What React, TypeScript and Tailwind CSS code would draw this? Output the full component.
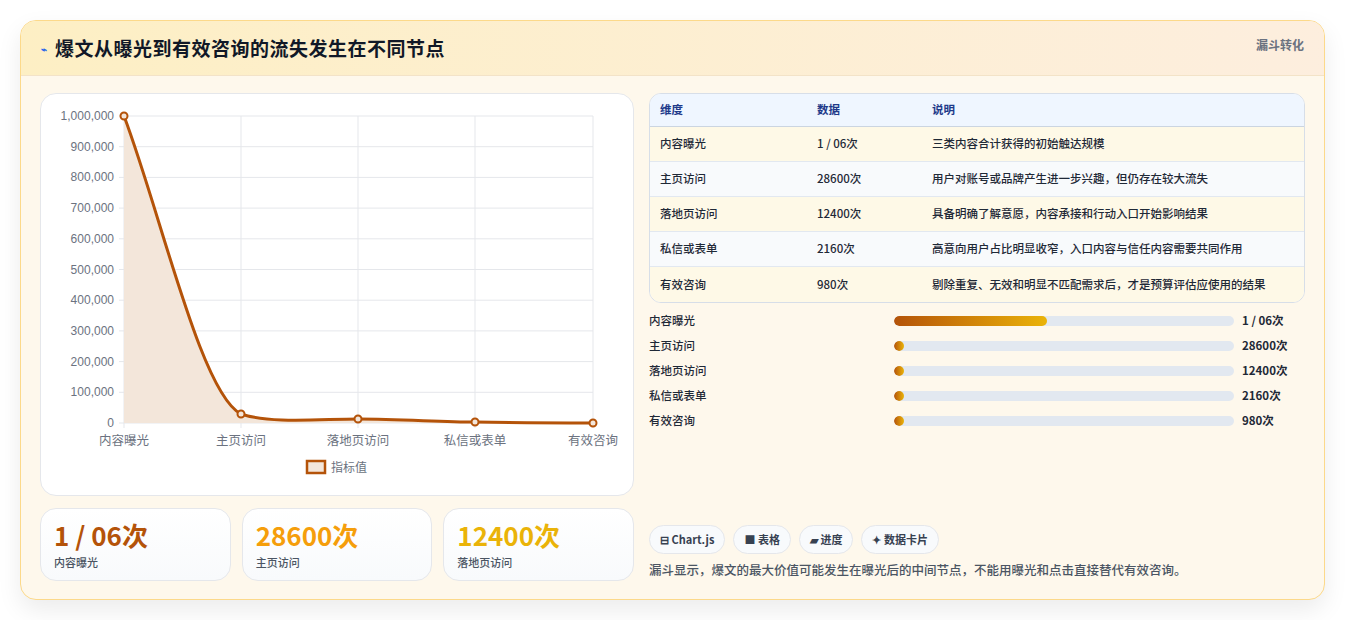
import React from 'react';

const rows = [
  { k: '内容曝光', v: '1 / 06次', d: '三类内容合计获得的初始触达规模' },
  { k: '主页访问', v: '28600次', d: '用户对账号或品牌产生进一步兴趣，但仍存在较大流失' },
  { k: '落地页访问', v: '12400次', d: '具备明确了解意愿，内容承接和行动入口开始影响结果' },
  { k: '私信或表单', v: '2160次', d: '高意向用户占比明显收窄，入口内容与信任内容需要共同作用' },
  { k: '有效咨询', v: '980次', d: '剔除重复、无效和明显不匹配需求后，才是预算评估应使用的结果' },
];

const bars = [
  { k: '内容曝光', v: '1 / 06次', w: 45 },
  { k: '主页访问', v: '28600次', w: 3 },
  { k: '落地页访问', v: '12400次', w: 3 },
  { k: '私信或表单', v: '2160次', w: 3 },
  { k: '有效咨询', v: '980次', w: 3 },
];

const Chart: React.FC = () => {
  const xs = [83, 200, 317, 434, 552];
  const ys = [22, 320, 325, 328, 329];
  const ticks = [0, 1, 2, 3, 4, 5, 6, 7, 8, 9, 10];
  const line = 'M83 22 C120 120, 160 300, 200 320 C230 330, 280 325, 317 325 C360 325, 400 328, 434 328 C480 329, 520 329, 552 329';
  return (
    <svg width="593" height="400" className="block" style={{ fontFamily: '"Liberation Sans", "Noto Sans CJK SC", sans-serif' }}>
      {ticks.map((t) => {
        const y = 329 - t * 30.7;
        return (
          <g key={t}>
            <line x1="78" x2="552" y1={y} y2={y} stroke="#e5e7eb" />
            <text x="73" y={y + 4} textAnchor="end" fontSize="12" fill="#6b7280">
              {(t * 100000).toLocaleString('en-US')}
            </text>
          </g>
        );
      })}
      {xs.map((x) => (
        <line key={x} x1={x} x2={x} y1="22" y2="334" stroke="#e5e7eb" />
      ))}
      <path d={line + ' L552 329 L83 329 Z'} fill="#f3e6da" />
      <path d={line} fill="none" stroke="#b45309" strokeWidth="3" />
      {xs.map((x, i) => (
        <circle key={x} cx={x} cy={ys[i]} r="3.5" fill="#f3e6da" stroke="#b45309" strokeWidth="2" />
      ))}
      {['内容曝光', '主页访问', '落地页访问', '私信或表单', '有效咨询'].map((l, i) => (
        <text key={l} x={xs[i]} y="351" textAnchor="middle" fontSize="12.5" fill="#6b7280">{l}</text>
      ))}
      <rect x="266" y="367" width="18" height="12" fill="#f3e6da" stroke="#b45309" strokeWidth="2.5" />
      <text x="290" y="378" fontSize="12" fill="#6b7280">指标值</text>
    </svg>
  );
};

const App: React.FC = () => {
  return (
    <div className="w-[1345px] h-[620px] bg-white pt-[20px] px-[20px]" style={{ fontFamily: '"Noto Sans CJK SC", "Liberation Sans", sans-serif' }}>
      <div className="h-[580px] rounded-2xl border border-[#fcd98a] bg-[#fef8ec] shadow-[0_10px_25px_rgba(0,0,0,0.08)] overflow-hidden">
        <div className="h-[55px] flex items-start justify-between px-5 bg-gradient-to-r from-[#fdefc4] to-[#fdeede] border-b border-[#f3e3c8]">
          <div className="flex items-center gap-[8px] h-[55px]">
            <span className="text-[#2563eb] text-[10px] font-bold">⌁</span>
            <h1 className="text-[19px] font-bold text-[#111827] tracking-[0.5px]">爆文从曝光到有效咨询的流失发生在不同节点</h1>
          </div>
          <span className="mt-[15px] text-[12px] font-bold text-[#6b7280]">漏斗转化</span>
        </div>
        <div className="flex gap-[15px] px-[19px] pt-[17px]">
          <div className="w-[594px] flex flex-col gap-[12px]">
            <div className="h-[403px] rounded-2xl border border-[#e5e7eb] bg-white overflow-hidden">
              <Chart />
            </div>
            <div className="grid grid-cols-3 gap-[11px]">
              {[
                { v: '1 / 06次', l: '内容曝光', c: 'text-[#b45309]' },
                { v: '28600次', l: '主页访问', c: 'text-[#f59e0b]' },
                { v: '12400次', l: '落地页访问', c: 'text-[#eab308]' },
              ].map((s) => (
                <div key={s.l} className="h-[73px] rounded-2xl border border-[#e5e7eb] bg-gradient-to-b from-white to-[#f8fafc] px-[13px] pt-[8px]">
                  <div className={`text-[26px] font-bold leading-[36px] ${s.c}`}>{s.v}</div>
                  <div className="text-[11px] font-medium text-[#4b5563] mt-[1px]">{s.l}</div>
                </div>
              ))}
            </div>
          </div>
          <div className="flex-1 flex flex-col">
            <div className="rounded-xl border border-[#d7dee8] overflow-hidden text-[11.5px] font-medium bg-white">
              <div className="grid grid-cols-[157px_115px_1fr] h-[33px] items-center bg-[#eff6ff] text-[#1e3a8a] font-bold px-[10px] border-b border-[#cbd5e1]">
                <span>维度</span><span>数据</span><span>说明</span>
              </div>
              {rows.map((r, i) => (
                <div key={r.k} className={`grid grid-cols-[157px_115px_1fr] h-[35px] items-center px-[10px] text-[#1f2937] ${i % 2 === 0 ? 'bg-[#fef9e7]' : 'bg-[#f8fafc]'} ${i < 4 ? 'border-b border-[#e2e8f0]' : ''}`}>
                  <span>{r.k}</span><span>{r.v}</span><span>{r.d}</span>
                </div>
              ))}
            </div>
            <div className="flex flex-col gap-[9px] mt-[10px]">
              {bars.map((b) => (
                <div key={b.k} className="flex items-center h-[16px] text-[11.5px] font-medium">
                  <span className="w-[245px] text-[#1f2937]">{b.k}</span>
                  <div className="w-[340px] h-[10px] rounded-full bg-[#e2e8f0] overflow-hidden">
                    <div className="h-full rounded-full bg-gradient-to-r from-[#b45309] to-[#eab308]" style={{ width: `${b.w}%` }} />
                  </div>
                  <span className="ml-[8px] font-bold text-[#1f2937]">{b.v}</span>
                </div>
              ))}
            </div>
            <div className="flex gap-[8px] mt-[96px]">
              {['⊟ Chart.js', '■ 表格', '▰ 进度', '✦ 数据卡片'].map((t) => (
                <span key={t} className="h-[29px] px-[10px] flex items-center rounded-full border border-[#e5e7eb] bg-[#f8fafc] text-[11px] font-bold text-[#374151]">{t}</span>
              ))}
            </div>
            <p className="mt-[7px] text-[12.5px] font-medium text-[#4b5563]">漏斗显示，爆文的最大价值可能发生在曝光后的中间节点，不能用曝光和点击直接替代有效咨询。</p>
          </div>
        </div>
      </div>
    </div>
  );
};

export default App;
